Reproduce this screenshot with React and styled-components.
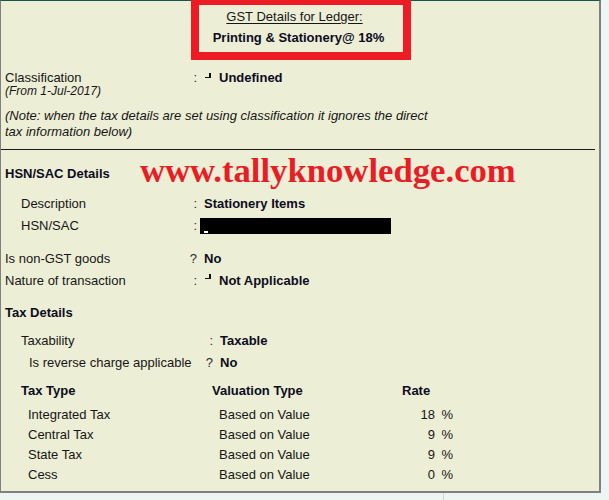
import React from "react";
import styled, { createGlobalStyle } from "styled-components";

const Global = createGlobalStyle`
  html, body { margin: 0; padding: 0; background: #EEF5F3; }
  body { font-family: "Liberation Sans", Arial, sans-serif; }
`;

const Page = styled.div`
  width: 609px;
  height: 500px;
  overflow: hidden;
  background: #eef5f3;
`;

const Panel = styled.div`
  position: relative;
  box-sizing: border-box;
  width: 601px;
  height: 493px;
  padding: 0 4px;
  background: #eceed5;
  border-top: 1px solid #17584a;
  border-left: 1px solid #808080;
  border-right: 2px solid #808080;
  border-bottom: 2px solid #808080;
  color: #161616;
  font-size: 13px;
`;

const Header = styled.header`
  padding-top: 6px;
  height: 41px;
  line-height: 20.5px;
  text-align: center;
`;

const Caption = styled.div`
  padding-right: 11px;
  span {
    text-decoration: underline;
    text-underline-offset: 2px;
  }
`;

const LedgerName = styled.div`
  padding-right: 3px;
  font-weight: bold;
  color: #0c0c1e;
`;

const Highlight = styled.div`
  position: absolute;
  left: 190px;
  top: -4px;
  width: 220px;
  height: 63px;
  box-sizing: border-box;
  border: 8px solid #ed1c24;
`;

const Watermark = styled.div`
  position: absolute;
  left: 139px;
  top: 152.9px;
  font-family: "Liberation Serif", "Times New Roman", serif;
  font-weight: bold;
  font-size: 34.7px;
  line-height: 34.7px;
  color: #e91d26;
  white-space: nowrap;
  pointer-events: none;
`;

const Row = styled.div`
  display: flex;
  align-items: flex-start;
  margin-top: ${(p) => p.$mt}px;
  padding-left: ${(p) => p.$indent || 0}px;
  line-height: ${(p) => p.$lh || 16}px;
`;

const Label = styled.div`
  flex: none;
  width: ${(p) => p.$w}px;
  white-space: nowrap;
`;

const SubLabel = styled.div`
  font-size: 12px;
  line-height: 15px;
  font-style: italic;
`;

const Sep = styled.div`
  flex: none;
  width: 8px;
  text-align: right;
  color: #2a2a2a;
`;

const Value = styled.div`
  display: flex;
  align-items: flex-start;
  padding-left: 7px;
  font-weight: bold;
  color: #0c0c1e;
  white-space: nowrap;
`;

const ListMark = styled.span`
  display: inline-block;
  flex: none;
  width: 3.5px;
  height: 4px;
  margin: ${(p) => p.$top || 1}px 8.5px 0 1px;
  border-right: 2px solid #111;
  border-bottom: 1.5px solid #111;
`;

const Redacted = styled.div`
  display: flex;
  align-items: flex-end;
  box-sizing: border-box;
  margin-left: -4px;
  width: 191px;
  height: 16px;
  padding: 0 0 1px 4px;
  background: #000;
`;

const Cursor = styled.span`
  width: 4px;
  height: 2px;
  background: #fff;
`;

const Note = styled.p`
  margin: 9px 0 0;
  font-style: italic;
  line-height: 16px;
`;

const Rule = styled.hr`
  margin: 9px 0 0 -4px;
  width: 594px;
  height: 1px;
  border: 0;
  background: #1a1a1a;
`;

const SectionTitle = styled.div`
  margin-top: ${(p) => p.$mt}px;
  line-height: 16px;
  font-weight: bold;
  color: #0c0c1e;
`;

const TaxGrid = styled.div`
  display: grid;
  grid-template-columns: ${(p) => p.$cols};
  margin-top: ${(p) => p.$mt || 0}px;
  padding-left: ${(p) => p.$indent}px;
  line-height: ${(p) => p.$lh}px;
  font-weight: ${(p) => (p.$head ? "bold" : "normal")};
  color: ${(p) => (p.$head ? "#0c0c1e" : "#161616")};
  white-space: nowrap;
`;

const RateNum = styled.div`
  text-align: right;
`;

const RatePct = styled.div`
  padding-left: 6.5px;
`;

const Below = styled.div`
  height: 7px;
`;

const Divider = styled.div`
  margin-left: 443px;
  width: 1px;
  height: 100%;
  background: #cdd6d4;
`;

const taxes = [
  { name: "Integrated Tax", rate: "18" },
  { name: "Central Tax", rate: "9" },
  { name: "State Tax", rate: "9" },
  { name: "Cess", rate: "0" },
];

export default function App() {
  return (
    <Page>
      <Global />
      <Panel>
        <Header>
          <Caption>
            <span>GST Details for Ledger:</span>
          </Caption>
          <LedgerName>Printing &amp; Stationery@ 18%</LedgerName>
        </Header>

        <Row $mt={23} $lh={13}>
          <Label $w={184}>
            <div>Classification</div>
            <SubLabel>(From 1-Jul-2017)</SubLabel>
          </Label>
          <Sep>:</Sep>
          <Value>
            <ListMark $top={2} />
            Undefined
          </Value>
        </Row>

        <Note>
          (Note: when the tax details are set using classification it ignores the direct
          <br />
          tax information below)
        </Note>

        <Rule />

        <SectionTitle $mt={16}>HSN/SAC Details</SectionTitle>

        <Row $mt={14} $indent={16}>
          <Label $w={168}>Description</Label>
          <Sep>:</Sep>
          <Value>Stationery Items</Value>
        </Row>
        <Row $mt={6} $indent={16}>
          <Label $w={168}>HSN/SAC</Label>
          <Sep>:</Sep>
          <Value>
            <Redacted>
              <Cursor />
            </Redacted>
          </Value>
        </Row>

        <Row $mt={16.5}>
          <Label $w={184}>Is non-GST goods</Label>
          <Sep>?</Sep>
          <Value>No</Value>
        </Row>
        <Row $mt={6}>
          <Label $w={184}>Nature of transaction</Label>
          <Sep>:</Sep>
          <Value>
            <ListMark />
            Not Applicable
          </Value>
        </Row>

        <SectionTitle $mt={16}>Tax Details</SectionTitle>

        <Row $mt={12} $indent={16}>
          <Label $w={184}>Taxability</Label>
          <Sep>:</Sep>
          <Value>Taxable</Value>
        </Row>
        <Row $mt={6} $indent={24}>
          <Label $w={176}>Is reverse charge applicable</Label>
          <Sep>?</Sep>
          <Value>No</Value>
        </Row>

        <TaxGrid $head $cols="191px 190px auto" $indent={16} $lh={16} $mt={12}>
          <div>Tax Type</div>
          <div>Valuation Type</div>
          <div>Rate</div>
        </TaxGrid>

        {taxes.map((t, i) => (
          <TaxGrid
            key={t.name}
            $cols="191px 192px 24px auto"
            $indent={23}
            $lh={20}
            $mt={i === 0 ? 6 : 0}
          >
            <div>{t.name}</div>
            <div>Based on Value</div>
            <RateNum>{t.rate}</RateNum>
            <RatePct>%</RatePct>
          </TaxGrid>
        ))}

        <Highlight />
        <Watermark>www.tallyknowledge.com</Watermark>
      </Panel>
      <Below>
        <Divider />
      </Below>
    </Page>
  );
}
